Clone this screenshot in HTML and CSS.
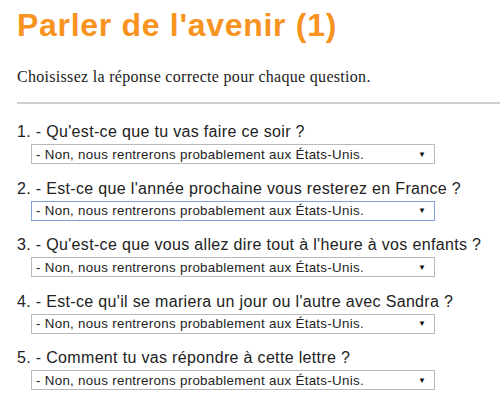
FILE: index.html
```html
<!DOCTYPE html>
<html lang="fr">
<head>
<meta charset="utf-8">
<title>Parler de l'avenir (1)</title>
<link rel="stylesheet" href="styles.css">
</head>
<body>
<main class="page">
  <h1 class="title">Parler de l'avenir (1)</h1>
  <p class="intro">Choisissez la réponse correcte pour chaque question.</p>
  <hr class="rule">
  <div class="questions">
    <div class="q">
      <div class="q-text">1. - Qu'est-ce que tu vas faire ce soir ?</div>
      <div class="sel"><span class="sel-text">- Non, nous rentrerons probablement aux États-Unis.</span><span class="arrow">▼</span></div>
    </div>
    <div class="q">
      <div class="q-text">2. - Est-ce que l'année prochaine vous resterez en France ?</div>
      <div class="sel focused"><span class="sel-text">- Non, nous rentrerons probablement aux États-Unis.</span><span class="arrow">▼</span></div>
    </div>
    <div class="q">
      <div class="q-text">3. - Qu'est-ce que vous allez dire tout à l'heure à vos enfants ?</div>
      <div class="sel"><span class="sel-text">- Non, nous rentrerons probablement aux États-Unis.</span><span class="arrow">▼</span></div>
    </div>
    <div class="q">
      <div class="q-text">4. - Est-ce qu'il se mariera un jour ou l'autre avec Sandra ?</div>
      <div class="sel"><span class="sel-text">- Non, nous rentrerons probablement aux États-Unis.</span><span class="arrow">▼</span></div>
    </div>
    <div class="q">
      <div class="q-text">5. - Comment tu vas répondre à cette lettre ?</div>
      <div class="sel"><span class="sel-text">- Non, nous rentrerons probablement aux États-Unis.</span><span class="arrow">▼</span></div>
    </div>
  </div>
</main>
</body>
</html>
```

FILE: styles.css
```css
html, body {
  margin: 0;
  padding: 0;
  background: #ffffff;
  overflow: hidden;
}

.page {
  padding: 7px 0 0 17px;
}

.title {
  margin: 0;
  font-family: "Liberation Sans", Arial, sans-serif;
  font-weight: bold;
  font-size: 32px;
  line-height: 37px;
  letter-spacing: 0.7px;
  color: #f7931e;
}

.intro {
  margin: 24px 0 0 0;
  font-family: "Liberation Serif", "Times New Roman", serif;
  font-size: 16px;
  line-height: 18px;
  letter-spacing: 0.3px;
  color: #222222;
}

.rule {
  margin: 16px 0 0 0;
  border: 0;
  height: 2px;
  background: #cfcfcf;
}

.questions {
  display: flex;
  flex-direction: column;
  gap: 15.5px;
  margin-top: 19px;
}

.q {
  display: flex;
  flex-direction: column;
  gap: 3px;
}

.q-text {
  font-family: "Liberation Sans", Arial, sans-serif;
  font-size: 16px;
  line-height: 18px;
  letter-spacing: 0.33px;
  color: #222222;
}

.sel {
  margin-left: 14px;
  width: 404px;
  height: 20px;
  border: 1px solid #b9b9b9;
  background: #ffffff;
  display: flex;
  align-items: center;
  padding: 0 8px 0 4px;
  box-sizing: border-box;
  font-family: "Liberation Sans", Arial, sans-serif;
  font-size: 13.33px;
  letter-spacing: 0.3px;
  color: #222222;
}

.sel.focused {
  border-color: #7fa2da;
}

.sel-text {
  flex: 1;
  white-space: nowrap;
}

.arrow {
  font-size: 8px;
  letter-spacing: 0;
  color: #111111;
}
```
